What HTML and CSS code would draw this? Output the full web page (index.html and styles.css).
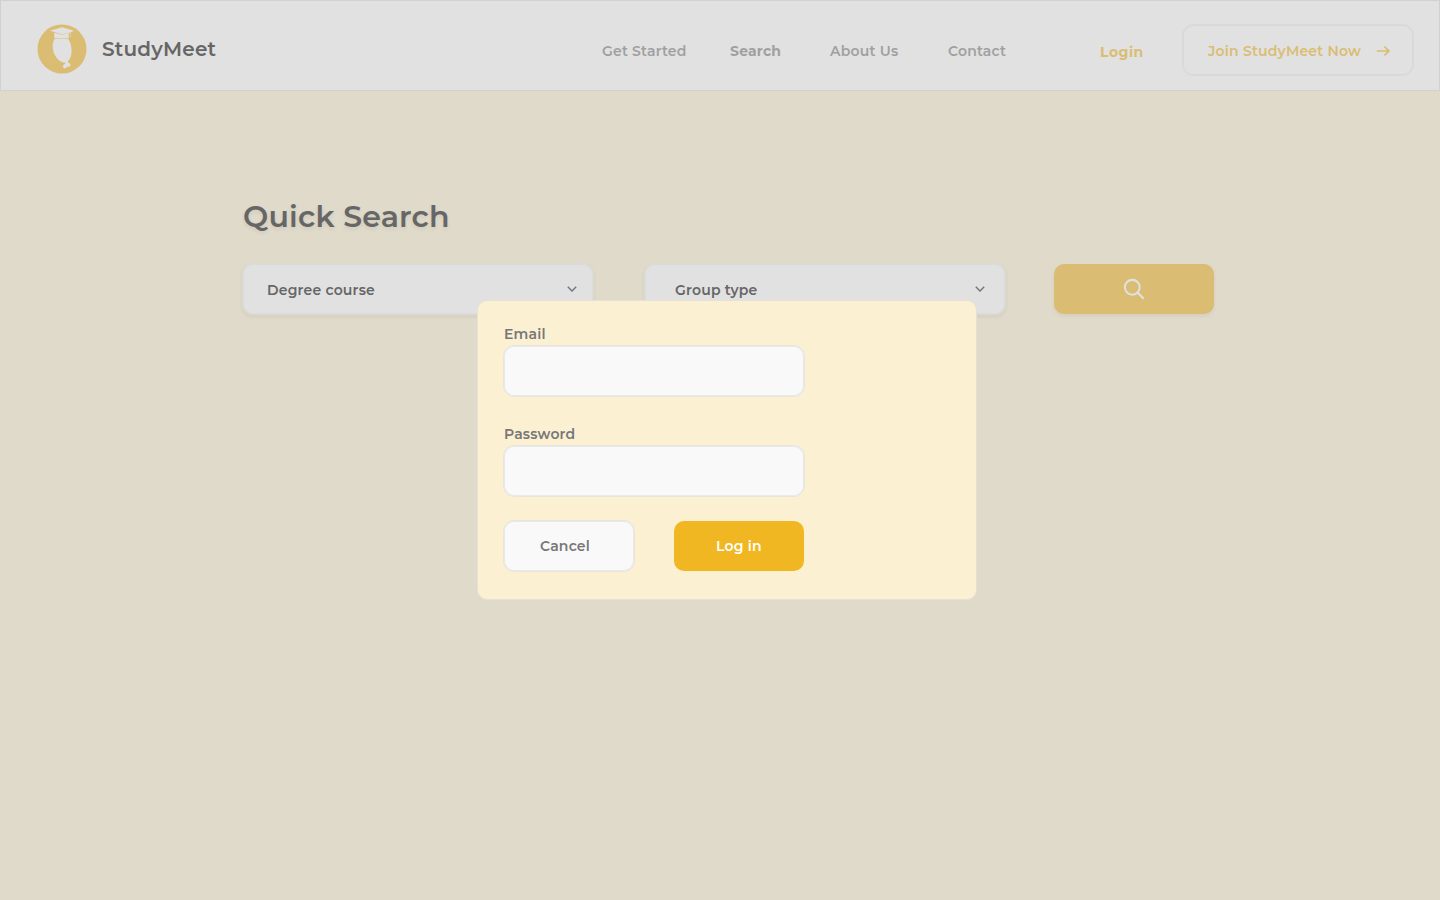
FILE: index.html
```html
<!DOCTYPE html>
<html lang="en">
<head>
<meta charset="utf-8">
<title>StudyMeet</title>
<link rel="stylesheet" href="styles.css">
</head>
<body>
<header class="header">
  <a class="brand">
    <svg class="logo" viewBox="0 0 50 50">
      <circle class="logo-disc" cx="25" cy="25" r="24.5"/>
      <g class="logo-owl">
        <path d="M13 6.8 L25 3.2 L37 6.8 L33.6 8.2 V13 H33.1 V8.4 L25 10.3 Z"/>
        <path d="M17.3 8.8 L25 10.8 L31.8 8.8 V14.2 H17.3 Z"/>
        <path d="M17.8 14.7 H31 C34.5 19.5 35.2 26 34 31.5 C33 36 30 38.8 26.6 38.4 C21.5 37.6 17.3 32 16 25.5 C15.2 21 15.8 17.3 17.8 14.7 Z"/>
        <path d="M27.8 37 H31 L31.2 39 C34 38.2 34.6 42.6 31.3 42.8 L29.8 42.8 C29.3 45.3 25.7 45 26 42.1 C26.2 40.8 27 40.2 28.2 40 Z"/>
      </g>
    </svg>
    <span class="brand-name">StudyMeet</span>
  </a>
  <nav class="nav">
    <a class="nav-start">Get Started</a>
    <a class="nav-search">Search</a>
    <a class="nav-about">About Us</a>
    <a class="nav-contact">Contact</a>
  </nav>
  <a class="login">Login</a>
  <a class="join"><span class="join-label">Join StudyMeet Now</span>
    <svg class="arrow" viewBox="0 0 14 12"><path d="M.8 6H13M8.3 1.5L13 6L8.3 10.5"/></svg>
  </a>
</header>
<main class="main">
  <h1 class="title">Quick Search</h1>
  <div class="filters">
    <div class="select select-course"><span class="select-label">Degree course</span>
      <svg class="chevron" viewBox="0 0 10 6"><path d="M.8.8L5 5L9.2.8"/></svg></div>
    <div class="select select-group"><span class="select-label">Group type</span>
      <svg class="chevron" viewBox="0 0 10 6"><path d="M.8.8L5 5L9.2.8"/></svg></div>
    <button class="search-btn"><svg class="search-icon" viewBox="0 0 22 22"><circle cx="9.3" cy="9.3" r="7.4"/><path d="M14.3 14.3L20.7 20.7"/></svg></button>
  </div>
</main>
<form class="dialog">
  <label class="label" for="email">Email</label>
  <input class="input" id="email" type="email">
  <label class="label" for="password">Password</label>
  <input class="input" id="password" type="password">
  <div class="actions">
    <button class="btn cancel" type="button">Cancel</button>
    <button class="btn submit" type="button">Log in</button>
  </div>
</form>
</body>
</html>
```
FILE: styles.css
```css
* { box-sizing: border-box; }
body {
  margin: 0;
  height: 900px;
  overflow: hidden;
  background: #e0daca;
  font: 600 14px/20px Montserrat, Inter, sans-serif;
  letter-spacing: .2px;
  color: #666;
}
svg { display: block; fill: none; flex: none; }
span { white-space: nowrap; }
.header {
  display: flex;
  align-items: flex-start;
  height: 91px;
  border: 1px solid #d0d1d2;
  background: #e1e1e1;
  padding: 0 24px 0 36px;
}
.brand { display: flex; align-items: center; gap: 15px; margin-top: 23px; width: 565px; }
.logo { width: 50px; height: 50px; }
.logo-disc { fill: #dabd73; }
.logo-owl { fill: #e1e1e1; }
.brand-name { font-size: 20px; letter-spacing: .2px; }
.nav { display: grid; grid-template-columns: 128px 100px 118px 152px; margin-top: 40px; color: #a0a0a0; white-space: nowrap; }
.nav-search { font-weight: 700; }
.login { width: 82px; margin-top: 41px; color: #dabd73; font-weight: 700; letter-spacing: .5px; }
.join {
  display: flex;
  align-items: center;
  justify-content: space-between;
  width: 232px;
  height: 52px;
  margin-top: 23px;
  padding: 0 23px 0 25px;
  border: 1px solid #dadada;
  box-shadow: inset 0 0 0 1px #d8d8d8;
  border-radius: 11px;
  color: #dabd73;
}
.join-label { padding-top: 2px; }
.arrow { width: 14px; height: 12px; margin-top: 1px; stroke: #dabd73; stroke-width: 1.7; }
.main { padding: 105px 0 0 242px; }
.title {
  margin: 0 0 0 1px;
  font-size: 30px;
  line-height: 41px;
  font-weight: 600;
  letter-spacing: .2px;
  text-shadow: 0 2px 4px rgba(0, 0, 0, .08);
}
.filters { display: flex; margin-top: 26px; }
.select {
  display: flex;
  align-items: center;
  justify-content: space-between;
  height: 52px;
  border: 1px solid #dcdad2;
  border-radius: 11px;
  background: #e1e1e1;
  box-shadow: inset 0 0 0 1px #dadbdc, 0 2px 4px rgba(0, 0, 0, .06);
}
.select-label { padding-top: 2px; }
.select-course { width: 352px; padding: 0 16.5px 0 24px; margin-right: 50px; }
.select-group { width: 362px; padding: 0 20.5px 0 30px; margin-right: 48px; }
.chevron { width: 10px; height: 6px; stroke: #777982; stroke-width: 1.5; margin-top: -1px; }
.search-btn {
  display: flex;
  align-items: center;
  justify-content: center;
  width: 160px;
  height: 50px;
  margin-top: 1px;
  padding: 0;
  border: 0;
  border-radius: 10px;
  background: #dabd73;
  box-shadow: 0 2px 4px rgba(0, 0, 0, .06);
}
.search-icon { width: 22px; height: 22px; stroke: #e1e1e1; stroke-width: 2.1; }
.dialog {
  position: absolute;
  left: 477px;
  top: 300px;
  width: 500px;
  height: 300px;
  padding: 23px 26px;
  border: 1px solid #e5e1d6;
  border-radius: 10px;
  background: #fcf0d3;
  color: #777;
}
.label { display: block; height: 21px; white-space: nowrap; }
.input, .cancel {
  border: 1px solid #eae5d9;
  box-shadow: inset 0 0 0 1px #e7e9ea;
  border-radius: 11px;
  background: #f9f9f9;
}
.input {
  display: block;
  width: 302px;
  height: 52px;
  margin: 0 0 27px -1px;
}
.actions { display: flex; gap: 39px; margin: -4px 0 0 -1px; }
.btn { font: inherit; letter-spacing: .2px; padding: 0; }
.cancel { width: 132px; height: 52px; color: #777; padding-right: 8px; }
.submit { width: 130px; height: 50px; margin-top: 1px; border: 0; border-radius: 10px; background: #f1b722; color: #fff; }
```
